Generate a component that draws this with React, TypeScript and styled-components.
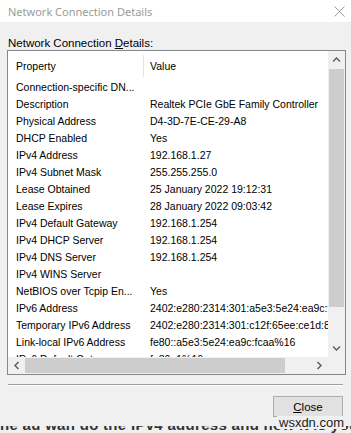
import React from "react";
import styled, { createGlobalStyle } from "styled-components";

const Global = createGlobalStyle`
  html, body { margin: 0; padding: 0; background: #f0f0f0; overflow: hidden; }
  body { width: 351px; height: 433px; font-family: "Liberation Sans", Arial, sans-serif; }
`;

const Window = styled.div`
  width: 351px;
  height: 433px;
  background: #f0f0f0;
  display: flex;
  flex-direction: column;
  position: relative;
  overflow: hidden;
`;

const TitleBar = styled.div`
  height: 22px;
  background: #ffffff;
  display: flex;
  align-items: center;
  justify-content: space-between;
  padding: 0 6px 0 8px;
  font-family: "Noto Sans", "Open Sans", sans-serif;
  font-size: 11px;
  color: #9a9a9a;
`;

const Body = styled.div`
  flex: 1;
  display: flex;
  flex-direction: column;
  padding: 15px 5px 0 7px;
`;

const Label = styled.div`
  font-size: 11.5px;
  color: #000;
  height: 13px;
  line-height: 13px;
  margin-left: 1px;
  u { text-decoration: underline; }
`;

const ListBox = styled.div`
  width: 339px;
  height: 325px;
  box-sizing: border-box;
  border: 1px solid #828790;
  background: #fff;
  display: grid;
  grid-template-columns: 1fr 17px;
  grid-template-rows: 1fr 17px;
`;

const Content = styled.div`
  overflow: hidden;
  font-size: 10.5px;
  color: #000;
`;

const Header = styled.div`
  display: grid;
  grid-template-columns: 135px 1fr;
  height: 28px;
  align-items: start;
  padding-top: 4px;
  box-sizing: border-box;
`;

const HeadCell = styled.div<{ $divider?: boolean }>`
  height: 22px;
  display: flex;
  align-items: center;
  padding-left: ${(p) => (p.$divider ? "6px" : "8px")};
  border-left: ${(p) => (p.$divider ? "1px solid #e5e5e5" : "none")};
`;

const Row = styled.div`
  display: grid;
  grid-template-columns: 135px 1fr;
  height: 17px;
  line-height: 17px;
  white-space: nowrap;
`;

const Cell = styled.div<{ $value?: boolean }>`
  padding-left: ${(p) => (p.$value ? "7px" : "8px")};
  overflow: hidden;
`;

const VScroll = styled.div`
  background: #f0f0f0;
  display: flex;
  flex-direction: column;
`;

const HScroll = styled.div`
  background: #f0f0f0;
  display: flex;
`;

const Corner = styled.div`
  background: #f0f0f0;
`;

const ArrowBtn = styled.div`
  width: 17px;
  height: 17px;
  display: flex;
  align-items: center;
  justify-content: center;
  flex: none;
`;

const Thumb = styled.div<{ $size: number; $vertical?: boolean }>`
  background: #cdcdcd;
  ${(p) => (p.$vertical ? `height: ${p.$size}px; margin: 1px 1px 0 1px;` : `width: ${p.$size}px; margin: 1px 0 1px 0;`)}
  flex: none;
`;

const Track = styled.div`
  flex: 1;
`;

const Separator = styled.div`
  margin: 9px 0 0 1px;
  width: 335px;
  height: 1px;
  background: #a0a0a0;
  border-bottom: 1px solid #ffffff;
`;

const ButtonRow = styled.div`
  display: flex;
  justify-content: flex-end;
  padding-right: 3px;
  margin-top: 10px;
`;

const Button = styled.button`
  width: 70px;
  height: 21px;
  background: #e1e1e1;
  border: 1px solid #adadad;
  font-family: "Liberation Sans", Arial, sans-serif;
  font-size: 11.5px;
  color: #000;
  padding: 0;
  u { text-decoration: underline; }
`;

const BottomStrip = styled.div`
  position: absolute;
  left: 0;
  bottom: 0;
  width: 351px;
  height: 7px;
  overflow: hidden;
  background: #f0f0f0;
`;

const StripText = styled.div`
  font-family: "Liberation Sans", Arial, sans-serif;
  font-weight: bold;
  font-size: 15px;
  line-height: 15px;
  color: #333;
  margin-top: -9px;
  white-space: nowrap;
  letter-spacing: 0.3px;
`;

const Watermark = styled.div`
  position: absolute;
  left: 277px;
  top: 416px;
  font-family: "Liberation Sans", Arial, sans-serif;
  font-size: 13px;
  line-height: 13px;
  color: #222;
  background: #f0f0f0;
  padding: 0 2px;
`;

const rows: [string, string][] = [
  ["Connection-specific DN...", ""],
  ["Description", "Realtek PCIe GbE Family Controller"],
  ["Physical Address", "D4-3D-7E-CE-29-A8"],
  ["DHCP Enabled", "Yes"],
  ["IPv4 Address", "192.168.1.27"],
  ["IPv4 Subnet Mask", "255.255.255.0"],
  ["Lease Obtained", "25 January 2022 19:12:31"],
  ["Lease Expires", "28 January 2022 09:03:42"],
  ["IPv4 Default Gateway", "192.168.1.254"],
  ["IPv4 DHCP Server", "192.168.1.254"],
  ["IPv4 DNS Server", "192.168.1.254"],
  ["IPv4 WINS Server", ""],
  ["NetBIOS over Tcpip En...", "Yes"],
  ["IPv6 Address", "2402:e280:2314:301:a5e3:5e24:ea9c:fcaa"],
  ["Temporary IPv6 Address", "2402:e280:2314:301:c12f:65ee:ce1d:8a2b"],
  ["Link-local IPv6 Address", "fe80::a5e3:5e24:ea9c:fcaa%16"],
  ["IPv6 Default Gateway", "fe80::1%16"],
];

const Chevron = ({ dir }: { dir: "up" | "down" | "left" | "right" }) => {
  const rot = { up: 0, right: 90, down: 180, left: 270 }[dir];
  return (
    <svg width="9" height="9" viewBox="0 0 9 9" style={{ transform: `rotate(${rot}deg)` }}>
      <path d="M1 6.5 L4.5 3 L8 6.5" fill="none" stroke="#606060" strokeWidth="1.5" />
    </svg>
  );
};

export default function App() {
  return (
    <>
      <Global />
      <Window>
        <TitleBar>
          <span>Network Connection Details</span>
          <svg width="11" height="11" viewBox="0 0 11 11">
            <path d="M0.5 0.5 L10.5 10.5 M10.5 0.5 L0.5 10.5" stroke="#9a9a9a" strokeWidth="1" />
          </svg>
        </TitleBar>
        <Body>
          <Label>
            Network Connection <u>D</u>etails:
          </Label>
          <ListBox>
            <Content>
              <Header>
                <HeadCell>Property</HeadCell>
                <HeadCell $divider>Value</HeadCell>
              </Header>
              {rows.map(([k, v]) => (
                <Row key={k}>
                  <Cell>{k}</Cell>
                  <Cell $value>{v}</Cell>
                </Row>
              ))}
            </Content>
            <VScroll>
              <ArrowBtn>
                <Chevron dir="up" />
              </ArrowBtn>
              <Thumb $vertical $size={238} />
              <Track />
              <ArrowBtn>
                <Chevron dir="down" />
              </ArrowBtn>
            </VScroll>
            <HScroll>
              <ArrowBtn>
                <Chevron dir="left" />
              </ArrowBtn>
              <Thumb $size={260} />
              <Track />
              <ArrowBtn>
                <Chevron dir="right" />
              </ArrowBtn>
            </HScroll>
            <Corner />
          </ListBox>
          <Separator />
          <ButtonRow>
            <Button>
              <u>C</u>lose
            </Button>
          </ButtonRow>
        </Body>
        <BottomStrip>
          <StripText>ne au wan do the IPv4 address and how it is your IPv6 address</StripText>
        </BottomStrip>
        <Watermark>wsxdn.com</Watermark>
      </Window>
    </>
  );
}
